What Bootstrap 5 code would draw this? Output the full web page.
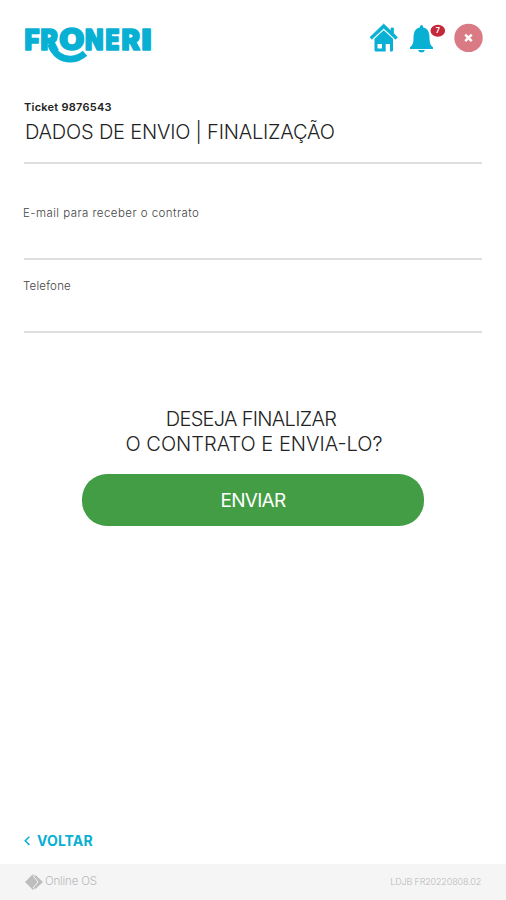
<!DOCTYPE html>
<html lang="pt-BR">
<head>
<meta charset="utf-8">
<meta name="viewport" content="width=device-width, initial-scale=1">
<title>Froneri</title>
<link rel="stylesheet" href="https://cdn.jsdelivr.net/npm/bootstrap@5.3.0/dist/css/bootstrap.min.css">
<style>
:root{--brand:#08b0d3}
body{font-family:Inter,"Open Sans",sans-serif;color:#222;font-weight:300}
svg{display:block;overflow:visible}
.top-bar{height:98px;padding:20px 23px 0 24px}
.logo-word{font-family:Inter,sans-serif;font-weight:900;font-size:28.5px;fill:var(--brand);stroke:var(--brand);stroke-width:1.6;stroke-linejoin:round}
.logo-ring{stroke-width:1.4;font-size:29.5px}
.heading-block{margin:0 24px;height:66px;border-bottom:2px solid #dedede}
.ticket-no{font-size:11px;line-height:18px;font-weight:600;letter-spacing:.25px}
.page-title{font-size:20px;line-height:32px;font-weight:300;letter-spacing:-.2px;margin:0 0 0 1px;white-space:nowrap}
.field{margin:0 24px;border-bottom:2px solid #dedede}
.field-mail{margin-top:40px;height:56px}
.field-phone{margin-top:17px;height:56px}
.field label{display:block;font-size:11.5px;line-height:19px;color:#444;margin-left:-1px;letter-spacing:.2px}
.field .label-mail{letter-spacing:.45px}
.field input{height:30px;line-height:30px;outline:0}
.question{margin:74px 0 0 2px;font-size:20px;line-height:25px;white-space:nowrap}
.q-one{letter-spacing:-.7px;margin-left:-6px}
.send{width:342px;height:52px;margin:17px 0 0 82px;border-radius:25px;background:#439d45;font-size:19px;font-weight:400;line-height:1;padding:1px 0 0;letter-spacing:-.7px}
.back-link{margin-left:24px;height:30px;gap:7px;color:var(--brand);font-weight:700;font-size:14px;line-height:14px;letter-spacing:.1px}
.foot{height:36px;background:#f5f5f5;padding:0 25px;color:#b9b9b9}
.os-name{font-size:11.5px;margin-left:2px;letter-spacing:-.2px}
.build-no{font-size:9px;letter-spacing:-.15px}
</style>
<script src="https://cdn.jsdelivr.net/npm/bootstrap@5.3.0/dist/js/bootstrap.bundle.min.js"></script>
</head>
<body class="bg-white">
<div class="d-flex flex-column vh-100 overflow-hidden">
<header class="top-bar d-flex justify-content-between align-items-start">
<svg width="128" height="44" viewBox="24 20 128 44" role="img" aria-label="Froneri">
<text class="logo-word" y="49.500" x="24.500" textLength="15" lengthAdjust="spacingAndGlyphs">F</text>
<text class="logo-word" y="49.500" x="40.500" textLength="17.500" lengthAdjust="spacingAndGlyphs">R</text>
<path d="M50.500 44C54 54 62 59.600 71 59.200Q79 58.700 85 53.300" fill="none" stroke="var(--brand)" stroke-width="6.800"/>
<circle cx="71.700" cy="39.300" r="14" fill="#fff"/>
<text class="logo-word logo-ring" x="59" y="50" textLength="25.500" lengthAdjust="spacingAndGlyphs">O</text>
<text class="logo-word" y="49.500" x="85" textLength="18.500" lengthAdjust="spacingAndGlyphs">N</text>
<text class="logo-word" y="49.500" x="105.500" textLength="14" lengthAdjust="spacingAndGlyphs">E</text>
<text class="logo-word" y="49.500" x="121.500" textLength="18.500" lengthAdjust="spacingAndGlyphs">R</text>
<text class="logo-word" y="49.500" x="141.500" textLength="10" lengthAdjust="spacingAndGlyphs">I</text>
</svg>
<svg width="115" height="36" viewBox="368 20 115 36">
<g fill="var(--brand)">
<path d="M383.700 24 370 37.200 371.800 39.300 383.700 28.300 395.600 39.300 397.500 37.200 393.500 33.300V28H391V31Z" stroke="var(--brand)" stroke-width=".7" stroke-linejoin="round"/>
<path fill-rule="evenodd" d="M383.700 30.300 374.500 38.800V50Q374.500 51.500 376 51.500H385.700V44H390V51.500H391.500Q393 51.500 393 50V38.800ZM377.500 44H382V48.500H377.500Z"/>
<path d="M421.500 25Q423.300 25 423.300 27.500C428 28.500 429.500 32.500 429.500 38C429.500 43 430.500 45.500 433 47.300V49H410V47.300C412.500 45.500 413.500 43 413.500 38C413.500 32.500 415 28.500 419.700 27.500Q419.700 25 421.500 25Z"/>
<path d="M418 50H425Q424 52.500 421.500 52.500Q419 52.500 418 50Z"/>
</g>
<ellipse cx="437.800" cy="30.700" rx="7.300" ry="6" fill="#c5283b"/>
<text x="437.800" y="33.300" text-anchor="middle" font-size="7" font-weight="700" fill="#fff">7</text>
<circle cx="468.500" cy="37.900" r="14.200" fill="#d97a84"/>
<path d="M465.200 34.700 471.700 41.200M471.700 34.700 465.200 41.200" stroke="#fff" stroke-width="2.500"/>
</svg>
</header>
<div class="heading-block"><div class="ticket-no">Ticket 9876543</div><h1 class="page-title">DADOS DE ENVIO | FINALIZAÇÃO</h1></div>
<div class="field field-mail"><label class="label-mail" for="mail">E-mail para receber o contrato</label><input id="mail" type="email" class="w-100 border-0 bg-transparent p-0"></div>
<div class="field field-phone"><label for="phone">Telefone</label><input id="phone" type="tel" class="w-100 border-0 bg-transparent p-0"></div>
<div class="question text-center"><div class="q-one">DESEJA FINALIZAR</div><div class="q-two">O CONTRATO E ENVIA-LO?</div></div>
<button type="button" class="btn send text-white">ENVIAR</button>
<a href="#" class="back-link d-flex mt-auto text-decoration-none"><svg width="6" height="10" viewBox="0 -2 6 10"><path d="M5.300 .7 1.200 4.800l4.100 4.100" fill="none" stroke="currentColor" stroke-width="1.500"/></svg><span>VOLTAR</span></a>
<footer class="foot d-flex justify-content-between align-items-center">
<div class="d-flex align-items-center"><svg width="18" height="16" viewBox="0 0 18 16"><path d="M8 0 0 8l8 8 6-8Z M10.500 1 9 2.500 13.500 8 9 13.500 10.500 15 18 8Z" fill="#bdbdbd"/><path d="M8 1.500 13 8 8 14" fill="none" stroke="#f5f5f5"/></svg><span class="os-name">Online OS</span></div>
<span class="build-no">LDJB FR20220808.02</span>
</footer>
</div>
</body>
</html>
